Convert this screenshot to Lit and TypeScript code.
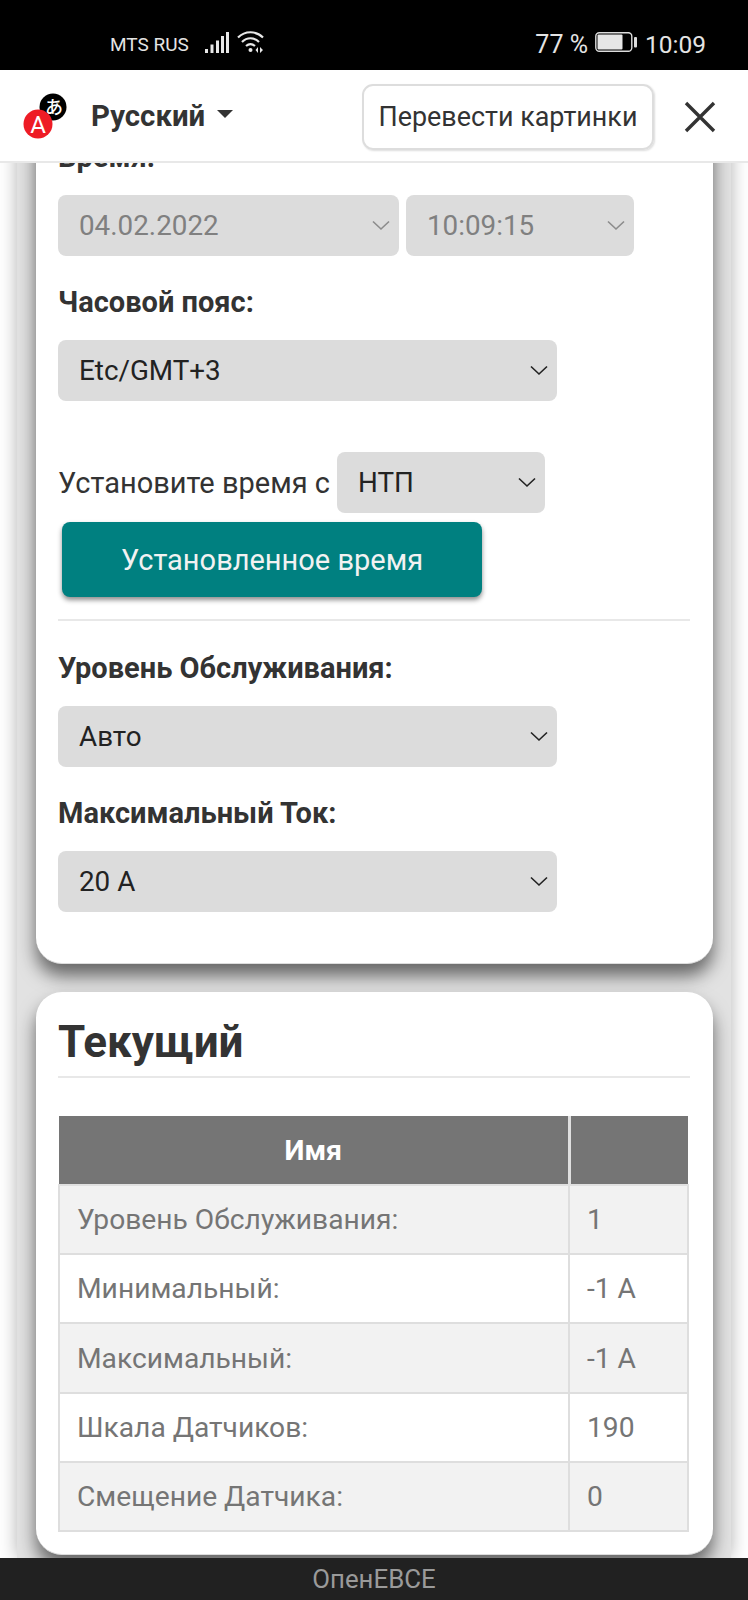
import { LitElement, html, css, svg } from "lit";
import { customElement } from "lit/decorators.js";

const chevron = svg`<path d="M1 1.5 L9 9 L17 1.5" fill="none" stroke="currentColor" stroke-width="1.6"/>`;

@customElement("app-root")
export class AppRoot extends LitElement {
  static styles = css`
    :host {
      display: flex;
      flex-direction: column;
      height: 1600px;
      overflow: hidden;
      font-family: Roboto, "Noto Sans", sans-serif;
      color: #333;
      background: #fff;
    }
    .status {
      flex: 0 0 70px;
      background: #000;
      color: #e4e4e4;
      display: flex;
      align-items: center;
      padding: 18px 42px 0 110px;
      box-sizing: border-box;
      height: 70px;
    }
    .carrier { font-size: 19px; margin-right: 16px; }
    .status svg { display: block; margin-top: -4px; }
    .status .wifi { margin-left: 7px; }
    .spacer { flex: 1; }
    .pct { font-size: 25px; margin-right: 7px; }
    .clock { font-size: 24.5px; margin-left: 8px; }
    .appbar {
      flex: 0 0 93px;
      box-sizing: border-box;
      height: 93px;
      background: #fff;
      border-bottom: 2px solid #e8e8e8;
      display: flex;
      align-items: center;
      padding: 0 32px 0 22px;
      position: relative;
      z-index: 2;
    }
    .tr-icon { display: block; margin-right: 21px; }
    .lang { font-size: 29.4px; font-weight: 700; color: #333; }
    .caret {
      width: 0;
      height: 0;
      border-left: 8.5px solid transparent;
      border-right: 8.5px solid transparent;
      border-top: 8.5px solid #333;
      margin-left: 12px;
      margin-top: -3px;
    }
    .tr-btn {
      margin-left: auto;
      margin-top: 2px;
      box-sizing: border-box;
      width: 292px;
      height: 66px;
      border: 2px solid #ddd;
      border-radius: 11px;
      box-shadow: 1px 1px 2px #ddd;
      display: flex;
      align-items: center;
      justify-content: center;
      font-size: 26.9px;
      color: #333;
    }
    .close { display: block; margin-left: 30px; margin-top: 2px; }
    .view {
      flex: 1;
      min-height: 0;
      overflow: hidden;
      display: flex;
      flex-direction: column;
      justify-content: flex-end;
      background: #fff;
    }
    .wrap {
      flex: none;
      margin: 0 17px;
      padding: 0 18px 3px 19px;
      background: #e2e2e2;
      box-shadow: 0 0 17px rgba(0, 0, 0, 0.3);
      display: flex;
      flex-direction: column;
      gap: 28px;
    }
    .card {
      background: #fff;
      border-radius: 26px;
      padding: 0 23px 0 22px;
      box-shadow: 0 12px 18px rgba(0, 0, 0, 0.55);
      border-bottom: 1px solid #ddd;
    }
    .card.first { padding-top: 40px; padding-bottom: 51px; }
    .card.second { padding-bottom: 22px; }
    .label {
      font-size: 29px;
      font-weight: 700;
      line-height: 30px;
      margin-bottom: 23px;
      color: #333;
    }
    .select {
      box-sizing: border-box;
      height: 61px;
      background: #dcdcdc;
      border-radius: 8px;
      padding: 0 8px 0 21px;
      display: flex;
      align-items: center;
      justify-content: space-between;
      font-size: 27.8px;
      color: #222;
    }
    .select svg { flex: none; margin-right: 1px; color: #222; }
    .select.off { color: #808080; }
    .select.off svg { color: #8c8c8c; }
    .wide { width: 499px; }
    .pair { display: flex; gap: 7px; margin-bottom: 31px; }
    .date { width: 341px; }
    .time { width: 228px; }
    .gap-after { margin-bottom: 31px; }
    .set-row {
      display: flex;
      align-items: center;
      gap: 7px;
      margin-top: 51px;
      font-size: 29px;
      color: #333;
    }
    .ntp { width: 208px; color: #222; }
    .set-btn {
      box-sizing: border-box;
      width: 420px;
      height: 75px;
      margin: 9px 0 22px 4px;
      background: #008080;
      color: #f2f2f2;
      border-radius: 8px;
      box-shadow: 0 3px 5px rgba(0, 0, 0, 0.45);
      display: flex;
      align-items: center;
      justify-content: center;
      font-size: 29px;
    }
    .rule { height: 2px; background: #e8e8e8; margin-bottom: 32px; }
    .title {
      font-size: 44px;
      font-weight: 700;
      line-height: 68px;
      padding-top: 16px;
      color: #333;
      border-bottom: 2px solid #e8e8e8;
      margin-bottom: 38px;
    }
    table {
      width: 631px;
      border-collapse: collapse;
      table-layout: fixed;
      font-size: 28.2px;
    }
    th {
      height: 68px;
      padding: 0;
      background: #757575;
      color: #fff;
      font-size: 28.5px;
      font-weight: 700;
      border: 2px solid #e0e0e0;
      border-top: none;
      border-left: none;
      border-right: none;
    }
    th + th { border-left: 3px solid #e0e0e0; }
    td {
      height: 69.2px;
      padding: 0 0 0 17px;
      box-sizing: border-box;
      color: #757575;
      border: 2px solid #dedede;
    }
    tr.odd td { background: #f2f2f2; }
    .col-a { width: 510px; }
    .footer {
      flex: 0 0 42px;
      height: 42px;
      background: #212121;
      color: #9a9a9a;
      font-size: 25.8px;
      display: flex;
      align-items: center;
      justify-content: center;
      position: relative;
      z-index: 2;
    }
  `;

  private rows: [string, string][] = [
    ["Уровень Обслуживания:", "1"],
    ["Минимальный:", "-1 A"],
    ["Максимальный:", "-1 A"],
    ["Шкала Датчиков:", "190"],
    ["Смещение Датчика:", "0"],
  ];

  private select(text: string, cls = "") {
    return html`<div class="select ${cls}">
      <span>${text}</span>
      <svg width="18" height="11" viewBox="0 0 18 11">${chevron}</svg>
    </div>`;
  }

  render() {
    return html`
      <div class="status">
        <span class="carrier">MTS RUS</span>
        <svg width="25" height="23" viewBox="0 0 25 23" fill="#e8e8e8">
          <rect x="0" y="18" width="3" height="4"/>
          <rect x="5.5" y="13.5" width="3" height="8.5"/>
          <rect x="11" y="9.5" width="3" height="12.5"/>
          <rect x="16" y="5" width="3" height="17"/>
          <rect x="21" y="1" width="3" height="21"/>
        </svg>
        <svg class="wifi" width="28" height="24" viewBox="0 0 28 24" fill="none" stroke="#e8e8e8" stroke-width="2.2">
          <path d="M1 7.5 C8 0.5 19 0.5 26 7.5"/>
          <path d="M5 12 C10 7 17 7 22 12"/>
          <path d="M9 16 C12 13.5 15 13.5 18 16"/>
          <circle cx="13.5" cy="20" r="2" fill="#e8e8e8" stroke="none"/>
          <path d="M21 17 L21 23 L18.5 20 Z M23 17 L23 23 L26 20 Z" fill="#e8e8e8" stroke="none"/>
        </svg>
        <span class="spacer"></span>
        <span class="pct">77 %</span>
        <svg width="42" height="20" viewBox="0 0 42 20">
          <rect x="0.8" y="0.8" width="36" height="18.4" rx="3.5" fill="none" stroke="#dcdcdc" stroke-width="1.4"/>
          <rect x="2.5" y="2.5" width="25" height="15" rx="1" fill="#e6e6e6"/>
          <rect x="39" y="5" width="3" height="10.5" rx="1" fill="#dcdcdc"/>
        </svg>
        <span class="clock">10:09</span>
      </div>
      <div class="appbar">
        <svg class="tr-icon" width="48" height="48" viewBox="0 0 48 48">
          <circle cx="31" cy="15" r="13.5" fill="#000"/>
          <text x="32" y="22" text-anchor="middle" font-size="18" font-weight="500" fill="#fff" font-family="'Noto Sans CJK SC', sans-serif">あ</text>
          <circle cx="16" cy="32" r="14.5" fill="#ee1c25"/>
          <text x="16" y="41" text-anchor="middle" font-size="24" fill="#fff" font-family="Roboto, sans-serif">A</text>
        </svg>
        <span class="lang">Русский</span>
        <span class="caret"></span>
        <div class="tr-btn">Перевести картинки</div>
        <svg class="close" width="32" height="32" viewBox="0 0 32 32" stroke="#333" stroke-width="3.4" fill="none">
          <path d="M2 2 L30 30 M30 2 L2 30"/>
        </svg>
      </div>
      <div class="view">
        <div class="wrap">
          <div class="card first">
            <div class="label">Время:</div>
            <div class="pair">
              ${this.select("04.02.2022", "off date")}
              ${this.select("10:09:15", "off time")}
            </div>
            <div class="label">Часовой пояс:</div>
            ${this.select("Etc/GMT+3", "wide")}
            <div class="set-row">
              <span>Установите время с</span>
              ${this.select("НТП", "ntp")}
            </div>
            <div class="set-btn">Установленное время</div>
            <div class="rule"></div>
            <div class="label">Уровень Обслуживания:</div>
            ${this.select("Авто", "wide gap-after")}
            <div class="label">Максимальный Ток:</div>
            ${this.select("20 A", "wide")}
          </div>
          <div class="card second">
            <div class="title">Текущий</div>
            <table>
              <colgroup><col class="col-a" /><col /></colgroup>
              <tr><th>Имя</th><th></th></tr>
              ${this.rows.map(
                ([k, v], i) => html`<tr class=${i % 2 === 0 ? "odd" : ""}><td>${k}</td><td>${v}</td></tr>`
              )}
            </table>
          </div>
        </div>
      </div>
      <div class="footer">ОпенЕВСЕ</div>
    `;
  }
}
